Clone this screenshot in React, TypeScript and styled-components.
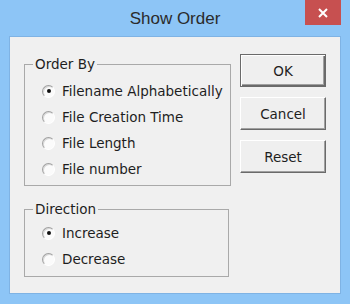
import React, { useState } from "react";
import styled, { createGlobalStyle } from "styled-components";

const GlobalStyle = createGlobalStyle`
  html, body {
    margin: 0;
    padding: 0;
    background: #8dc5f6;
  }
`;

const Window = styled.div`
  width: 350px;
  height: 304px;
  box-sizing: border-box;
  background: #8dc5f6;
  padding: 0 9px 10px 9px;
  display: flex;
  flex-direction: column;
  font-family: "DejaVu Sans", "Liberation Sans", sans-serif;
`;

const TitleBar = styled.div`
  height: 36px;
  display: grid;
  grid-template-columns: 1fr auto 1fr;
  align-items: start;
`;

const Title = styled.div`
  grid-column: 2;
  font-family: "Liberation Sans", Arial, sans-serif;
  font-size: 17px;
  line-height: 20px;
  padding-top: 9px;
  color: #2b2b2b;
`;

const CloseButton = styled.div`
  grid-column: 3;
  justify-self: end;
  width: 36px;
  height: 25px;
  background: #c75050;
  display: flex;
  align-items: center;
  justify-content: center;
`;

const Client = styled.div`
  flex: 1;
  background: #f0f0f0;
  border: 1px solid #7fb3e4;
  display: flex;
  gap: 9px;
  padding-left: 14px;
`;

const LeftColumn = styled.div`
  display: flex;
  flex-direction: column;
  gap: 23px;
  margin-top: 27px;
`;

const GroupBox = styled.div<{ $w: number; $h: number; $padTop: number }>`
  position: relative;
  box-sizing: border-box;
  width: ${(p) => p.$w}px;
  height: ${(p) => p.$h}px;
  border: 1px solid #a9a9a9;
  padding: ${(p) => p.$padTop}px 0 0 17px;
  display: flex;
  flex-direction: column;
`;

const Legend = styled.span`
  position: absolute;
  top: -9px;
  left: 8px;
  padding: 0 2px;
  background: #f0f0f0;
  font-size: 13.5px;
  line-height: 16px;
  color: #1e1e1e;
`;

const RadioRow = styled.label`
  height: 26px;
  display: flex;
  align-items: center;
  gap: 7px;
  font-size: 13.5px;
  color: #1e1e1e;
  cursor: default;
`;

const RadioCircle = styled.span<{ $checked: boolean }>`
  box-sizing: border-box;
  width: 13px;
  height: 13px;
  border-radius: 50%;
  border: 1px solid;
  border-color: #a0a0a0 #ffffff #ffffff #a0a0a0;
  background: #fbfbfb;
  box-shadow: inset 1px 1px 0 #d8d8d8;
  display: flex;
  align-items: center;
  justify-content: center;

  &::after {
    content: "";
    width: 4px;
    height: 4px;
    border-radius: 50%;
    background: #111;
    display: ${(p) => (p.$checked ? "block" : "none")};
  }
`;

const ButtonColumn = styled.div`
  display: flex;
  flex-direction: column;
  gap: 10px;
  margin-top: 17px;
`;

const Button = styled.button<{ $default?: boolean }>`
  box-sizing: border-box;
  width: 86px;
  height: 33px;
  padding: 0;
  font-family: "DejaVu Sans", "Liberation Sans", sans-serif;
  font-size: 13.5px;
  color: #1e1e1e;
  background: #efefef;
  border: 1px solid;
  border-color: ${(p) =>
    p.$default ? "#6a6a6a" : "#ffffff #6a6a6a #6a6a6a #ffffff"};
  box-shadow: ${(p) =>
    p.$default
      ? "inset 1px 1px 0 #ffffff, inset -1px -1px 0 #6a6a6a, inset -2px -2px 0 #a0a0a0"
      : "inset -1px -1px 0 #a0a0a0"};
`;

type Option = { id: string; label: string };

function RadioGroup({
  options,
  value,
  onChange,
}: {
  options: Option[];
  value: string;
  onChange: (v: string) => void;
}) {
  return (
    <>
      {options.map((o) => (
        <RadioRow key={o.id} onClick={() => onChange(o.id)}>
          <RadioCircle $checked={value === o.id} />
          {o.label}
        </RadioRow>
      ))}
    </>
  );
}

const orderOptions: Option[] = [
  { id: "alpha", label: "Filename Alphabetically" },
  { id: "created", label: "File Creation Time" },
  { id: "length", label: "File Length" },
  { id: "number", label: "File number" },
];

const directionOptions: Option[] = [
  { id: "inc", label: "Increase" },
  { id: "dec", label: "Decrease" },
];

export default function App() {
  const [order, setOrder] = useState("alpha");
  const [direction, setDirection] = useState("inc");

  return (
    <Window>
      <GlobalStyle />
      <TitleBar>
        <Title>Show Order</Title>
        <CloseButton>
          <svg width="10" height="10" viewBox="0 0 10 10">
            <path d="M1 1L9 9M9 1L1 9" stroke="#fff" strokeWidth="2" />
          </svg>
        </CloseButton>
      </TitleBar>
      <Client>
        <LeftColumn>
          <GroupBox $w={207} $h={122} $padTop={13}>
            <Legend>Order By</Legend>
            <RadioGroup options={orderOptions} value={order} onChange={setOrder} />
          </GroupBox>
          <GroupBox $w={205} $h={68} $padTop={10}>
            <Legend>Direction</Legend>
            <RadioGroup
              options={directionOptions}
              value={direction}
              onChange={setDirection}
            />
          </GroupBox>
        </LeftColumn>
        <ButtonColumn>
          <Button $default>OK</Button>
          <Button>Cancel</Button>
          <Button>Reset</Button>
        </ButtonColumn>
      </Client>
    </Window>
  );
}
